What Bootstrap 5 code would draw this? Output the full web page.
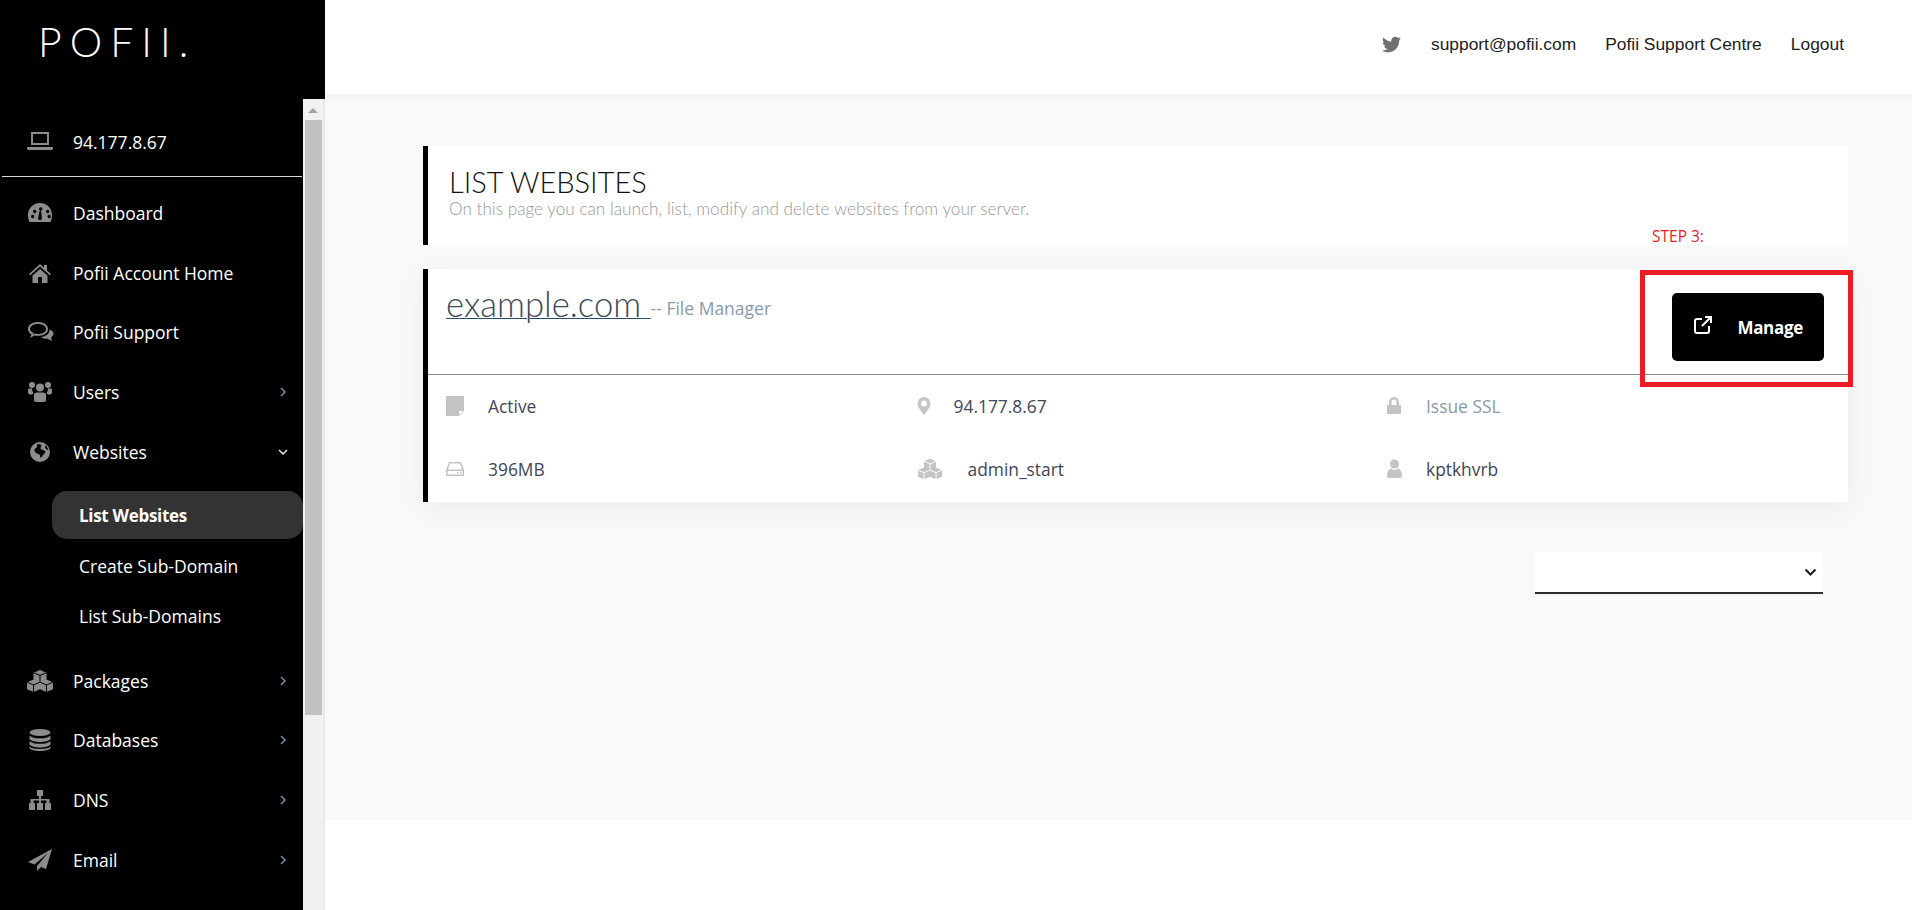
<!DOCTYPE html>
<html lang="en">
<head>
<meta charset="utf-8">
<title>List Websites</title>
<link href="https://cdn.jsdelivr.net/npm/bootstrap@5.3.0/dist/css/bootstrap.min.css" rel="stylesheet">
<style>
html,body{height:100%;overflow:hidden;background:#fff}
body{font-family:"Open Sans",sans-serif;width:1912px;height:910px}
.shell{height:910px}
.side{width:325px;background:#000;flex:none}
.logo-wrap{height:99px;padding:16px 0 0 38px}
.logo-text{font-family:Lato,sans-serif;font-weight:300;font-size:41px;line-height:52px;letter-spacing:8px;color:#fff}
.side-body{height:811px;overflow:hidden}
.side-nav{width:303px;flex:none;overflow:hidden}
.ip-row{border-bottom:1px solid #d8d8d8;margin-left:2px;margin-right:1px;height:78px;padding-top:30px;padding-left:26px;color:#fff}
.nav-line{height:59.750px;color:#fff;font-size:17.5px;padding-left:26px;padding-right:12px;text-decoration:none}
.nav-first{margin-top:6px}
.ico{width:28px;height:24px;fill:#8c8c8c;flex:none;margin-right:19px}
.ip-row .ico{margin-left:-2px;margin-right:19px}
.ip-text{font-size:17.5px}
.chev{width:10px;height:10px;fill:none;stroke:#6f8fa8;stroke-width:1.5;margin-left:auto;margin-right:3px}
.chev-open{stroke:#e8e8e8}
.sub-list{padding:9px 0 4px 52px;margin-bottom:6px}
.sub-link{display:flex;align-items:center;height:48px;margin-bottom:2px;padding-left:27px;padding-top:2px;color:#fff;font-size:17.5px;text-decoration:none;border-radius:15px}
.sub-on{background:#333;font-weight:700;font-size:17px;letter-spacing:-.3px}
.fake-bar{width:22px;background:#f1f1f1;border-right:2px solid #e6e9f0}
.fake-up{height:21px;padding-top:9px}
.fake-up i{display:block;width:0;height:0;margin:0 auto;border:5px solid transparent;border-top:0;border-bottom:5px solid #a3a3a3}
.fake-thumb{height:595px;width:17px;background:#c1c1c1;margin-left:2px}
.main-col{min-width:0}
.top-bar{height:94px;background:#fff;box-shadow:0 0 12px rgba(0,0,0,.06);position:relative;z-index:1;padding:0 68px 5px 0;font-family:"Liberation Sans",sans-serif;font-size:17.4px;color:#1c1c1c}
.top-bar a{color:#1c1c1c;text-decoration:none;margin-left:29px}
.top-bar svg{width:21px;height:19px;fill:#707070}
.stage{height:726px;background:#f9f9f9;padding:52px 64px 0 98px}
.head-panel{height:99px;background:#fff;border-left:5px solid #000;padding:18px 0 0 21px}
.head-title{font-family:Lato,sans-serif;font-weight:300;font-size:29px;line-height:36px;color:#111;margin:0}
.head-sub{font-family:Lato,sans-serif;font-weight:300;font-size:17.2px;line-height:18px;color:#999;margin:0}
.step-mark{height:24px;padding-left:1229px;color:#ed1c24;font-size:15.5px;line-height:21px;margin-top:-19px;position:relative}
.site-panel{height:233px;background:#fff;border-left:5px solid #000;box-shadow:0 6px 30px rgba(0,0,0,.06);margin-top:19px;position:relative}
.site-top{height:106px;border-bottom:1px solid #8c8c8c;padding:13px 24px 0 18px}
.site-name{font-family:Lato,sans-serif;font-weight:300;font-size:34.700px;line-height:44px;color:#3d4a5a;text-decoration:underline;text-decoration-color:#2d4a6b;text-decoration-thickness:1px}
.site-tail{color:#8a9aab;font-size:17.5px;position:relative;top:-2px}
.manage-btn{width:152px;height:68px;background:#000;color:#fff;font-size:17px;font-weight:700;letter-spacing:-.3px;border:0;border-radius:5px;margin-top:11px;padding:2px 21px 0 21px}
.manage-btn svg{width:20px;height:20px;fill:none;stroke:#fff;stroke-width:2;flex:none;margin-top:-6px}
.red-box{position:absolute;left:1212px;top:1px;width:213px;height:117px;border:5px solid #ed1c24;pointer-events:none}
.site-grid{display:grid;grid-template-columns:470.5px 470.5px 1fr;padding-left:18px}
.site-cell{height:63px;color:#3f4659;font-size:17.4px}
.site-cell svg{width:20px;height:20px;fill:#c4c4c4;flex:none;margin-top:-2px}
.site-cell svg.cube-ico{width:26px;height:24px}
.gap-a{margin-left:22px}
.gap-b{margin-left:17px}
.gap-c{margin-left:25px}
.gap-d{margin-left:19px}
.cell-muted{color:#8a9aab}
.pick-wrap{margin-top:50px;padding-right:25px}
.pick{width:288px;height:42px;background:#fff;border-bottom:2px solid #2d2d2d;padding-right:6px}
.pick svg{width:13px;height:9px;fill:none;stroke:#222;stroke-width:2.2}
.cube-lines{fill:none;stroke-width:1}
.ico .cube-lines{stroke:#000}
.cube-ico .cube-lines{stroke:#fff}
</style>
</head>
<body>
<div class="shell d-flex">
  <aside class="side d-flex flex-column">
    <div class="logo-wrap"><span class="logo-text">POFII.</span></div>
    <div class="side-body d-flex">
      <nav class="side-nav">
        <div class="ip-row d-flex align-items-start">
          <svg class="ico" viewBox="0 0 28 24"><path d="M5 3h18v13H5zM7 5v9h14V5zM1 18h26v1.500q0 1.500-1.500 1.500h-23Q1 21 1 19.500z" fill-rule="evenodd"/></svg>
          <span class="ip-text">94.177.8.67</span>
        </div>
        <a class="nav-line nav-first d-flex align-items-center" href="#"><svg class="ico" viewBox="0 0 28 24"><path fill-rule="evenodd" d="M14 2C6.500 2 2 8 2 14c0 3 .5 5 1.500 7h21c1-2 1.500-4 1.500-7 0-6-4.500-12-12-12zM13 8a1.700 1.700 0 1 0 0-.1zM7 10.500a1.700 1.700 0 1 0 0-.1zM20 10.500a1.700 1.700 0 1 0 0-.1zM5 15.500a1.700 1.700 0 1 0 0-.1zM21.500 15.500a1.700 1.700 0 1 0 0-.1zM12 18a2.300 2.300 0 0 0 4 0l-1-8h-1.500z"/></svg>Dashboard</a>
        <a class="nav-line d-flex align-items-center" href="#"><svg class="ico" viewBox="0 0 28 24"><path d="M14 3 3 13l1.200 1.300L14 5.500l9.800 8.800L25 13l-4-3.600V4h-3v2.700zM6.500 14.500V22h5.500v-6h4v6h5.500v-7.500L14 8z"/></svg>Pofii Account Home</a>
        <a class="nav-line d-flex align-items-center" href="#"><svg class="ico" viewBox="0 0 28 24"><path fill-rule="evenodd" d="M12 2C6 2 2 5 2 9c0 2.300 1.300 4.200 3.500 5.500L4 18l4.500-2.500c1.100.2 2.300.3 3.500.3 6 0 10-3 10-6.800S18 2 12 2zm0 2c4.700 0 8 2.200 8 5s-3.300 5-8 5c-1.300 0-2.500-.2-3.500-.5l-1.500.9.500-1.700C5.300 11.800 4 10.500 4 9c0-2.800 3.300-5 8-5z"/><path d="M23.500 9.500c.3 3.800-3.500 7-8.500 7.500 1.500 1.300 4 2 6.500 1.700L26 21l-1-3.500c1.500-1 2.500-2.500 2.500-4 0-1.600-1.500-3-4-4z"/></svg>Pofii Support</a>
        <a class="nav-line d-flex align-items-center" href="#"><svg class="ico" viewBox="0 0 28 24"><circle cx="14" cy="7.500" r="4"/><circle cx="6" cy="5" r="3"/><circle cx="22" cy="5" r="3"/><path d="M2 9.500q0-1 1-1h3a6 6 0 0 0 1.500 4.500L6 14.500H4q-2 0-2-2zM26 9.500q0-1-1-1h-3a6 6 0 0 1-1.500 4.500l1.500 1.500h2q2 0 2-2zM8 15q0-2.500 3-2.500h6q3 0 3 2.500v5q0 2-2 2h-8q-2 0-2-2z"/></svg>Users<svg class="chev" viewBox="0 0 10 10"><path d="M3 1l4 4-4 4"/></svg></a>
        <a class="nav-line d-flex align-items-center" href="#"><svg class="ico" viewBox="0 0 28 24"><path fill-rule="evenodd" d="M14 2a10 10 0 1 0 0 20 10 10 0 0 0 0-20zm-3 2.500c2-.5 4 0 4.500 1s-1.500 1.500-1 3 3 1 4.500 2.500-2 3.500-3 5.500-2 1-2-1-4-1.500-5-3.500-.5-3 1-4 1-2.500 1-3.500zm9 .5 2.500 5-2-.5-1.500-2z"/></svg>Websites<svg class="chev chev-open" viewBox="0 0 10 10"><path d="M1 3l4 4 4-4"/></svg></a>
        <div class="sub-list">
          <a class="sub-link sub-on" href="#">List Websites</a>
          <a class="sub-link" href="#">Create Sub-Domain</a>
          <a class="sub-link" href="#">List Sub-Domains</a>
        </div>
        <a class="nav-line d-flex align-items-center" href="#"><svg class="ico" viewBox="0 0 28 24"><path d="M14 1l6.500 2.700v7L14 13.400l-6.500-2.700v-7zM7.500 10.500l6.500 2.700v7.100L7.500 23 1 20.300v-7.100zM20.500 10.500l6.500 2.700v7.100L20.500 23 14 20.300v-7.100z"/><path class="cube-lines" d="M7.500 3.700 14 6.400l6.500-2.700M14 6.400v7M1 13.200l6.500 2.700 6.500-2.700M7.500 15.900V23M14 13.200l6.500 2.700 6.500-2.700M20.500 15.900V23"/></svg>Packages<svg class="chev" viewBox="0 0 10 10"><path d="M3 1l4 4-4 4"/></svg></a>
        <a class="nav-line d-flex align-items-center" href="#"><svg class="ico" viewBox="0 0 28 24"><ellipse cx="14" cy="4.500" rx="10.500" ry="3.500"/><path d="M3.500 7.500c2 2 5.500 2.800 10.500 2.800s8.500-.8 10.500-2.800V11c-1.500 2-5.500 3-10.500 3S5 13 3.500 11zM3.500 13c2 2 5.500 2.800 10.500 2.800s8.500-.8 10.500-2.800v3.500c-1.500 2-5.500 3-10.500 3s-9-1-10.500-3zM3.500 18.500c2 1.800 5.500 2.500 10.500 2.500s8.500-.7 10.500-2.500V20c-1 2-5.500 3-10.500 3S4.500 22 3.500 20z"/></svg>Databases<svg class="chev" viewBox="0 0 10 10"><path d="M3 1l4 4-4 4"/></svg></a>
        <a class="nav-line d-flex align-items-center" href="#"><svg class="ico" viewBox="0 0 28 24"><path d="M11 2h6v6h-2v3h8.500v4H25v7h-6v-7h1.500v-2.500H15V15h2v7h-6v-7h2v-2.500H7.500V15H9v7H3v-7h1.500v-4H13V8h-2z"/></svg>DNS<svg class="chev" viewBox="0 0 10 10"><path d="M3 1l4 4-4 4"/></svg></a>
        <a class="nav-line d-flex align-items-center" href="#"><svg class="ico" viewBox="0 0 28 24"><path d="M26 1 2 14l6.500 2.500L22 5 11 18v5l4-4 5 2z"/></svg>Email<svg class="chev" viewBox="0 0 10 10"><path d="M3 1l4 4-4 4"/></svg></a>
      </nav>
      <div class="fake-bar flex-grow-1">
        <div class="fake-up"><i></i></div>
        <div class="fake-thumb"></div>
      </div>
    </div>
  </aside>
  <main class="main-col flex-grow-1">
    <header class="top-bar d-flex align-items-center justify-content-end">
      <svg viewBox="0 0 512 512"><path d="M459.370 151.716c.325 4.548.325 9.097.325 13.645 0 138.720-105.583 298.558-298.558 298.558-59.452 0-114.680-17.219-161.137-47.106 8.447.974 16.568 1.299 25.340 1.299 49.055 0 94.213-16.568 130.274-44.832-46.132-.975-84.792-31.188-98.112-72.772 6.498.974 12.995 1.624 19.818 1.624 9.421 0 18.843-1.300 27.614-3.573-48.081-9.747-84.143-51.980-84.143-102.985v-1.299c13.969 7.797 30.214 12.670 47.431 13.319-28.264-18.843-46.781-51.005-46.781-87.391 0-19.492 5.197-37.360 14.294-52.954 51.655 63.675 129.300 105.258 216.365 109.807-1.624-7.797-2.599-15.918-2.599-24.040 0-57.828 46.782-104.934 104.934-104.934 30.213 0 57.502 12.670 76.670 33.137 23.715-4.548 46.456-13.320 66.599-25.340-7.798 24.366-24.366 44.833-46.132 57.827 21.117-2.273 41.584-8.122 60.426-16.243-14.292 20.791-32.161 39.308-52.628 54.253z"/></svg>
      <a href="#">support@pofii.com</a>
      <a href="#">Pofii Support Centre</a>
      <a href="#">Logout</a>
    </header>
    <section class="stage">
      <div class="head-panel">
        <h1 class="head-title">LIST WEBSITES</h1>
        <p class="head-sub">On this page you can launch, list, modify and delete websites from your server.</p>
      </div>
      <div class="step-mark">STEP 3:</div>
      <div class="site-panel">
        <div class="site-top d-flex justify-content-between align-items-start">
          <div><a class="site-name" href="#">example.com </a><span class="site-tail">-- File Manager</span></div>
          <button class="manage-btn d-flex align-items-center justify-content-between" type="button">
            <svg viewBox="0 0 20 20"><path d="M9 4H4q-2 0-2 2v10q0 2 2 2h10q2 0 2-2v-5M9 11 18 2M12 2h6v6"/></svg>
            <span>Manage</span>
          </button>
        </div>
        <div class="site-grid">
          <div class="site-cell d-flex align-items-center"><svg viewBox="0 0 20 20"><path d="M0 0h18v15l-5 5H0zM13 15v4l4-4z" fill-rule="evenodd"/></svg><span class="gap-a">Active</span></div>
          <div class="site-cell d-flex align-items-center"><svg viewBox="0 0 20 20"><path fill-rule="evenodd" d="M7 1A6.500 6.500 0 0 0 .5 7.500c0 3 3.500 8 6.500 11.500 3-3.500 6.500-8.500 6.500-11.500A6.500 6.500 0 0 0 7 1zm0 3.500a3 3 0 1 1 0 6 3 3 0 0 1 0-6z"/></svg><span class="gap-b">94.177.8.67</span></div>
          <div class="site-cell d-flex align-items-center cell-muted"><svg viewBox="0 0 20 20"><path fill-rule="evenodd" d="M2 9V6a5 5 0 0 1 10 0v3h2v9H0V9zm2.500 0h5V6a2.500 2.500 0 0 0-5 0z"/></svg><span class="gap-d">Issue SSL</span></div>
          <div class="site-cell d-flex align-items-center"><svg viewBox="0 0 20 20"><path fill-rule="evenodd" d="M3 3h12l3 8v6H0v-6zm1 1.500-2 6h14l-2-6zM1.500 12v3.500h15V12zM11 13h1.500v1.500H11zM14 13h1.500v1.500H14z"/></svg><span class="gap-a">396MB</span></div>
          <div class="site-cell d-flex align-items-center"><svg class="cube-ico" viewBox="0 0 28 24"><path d="M14 1l6.500 2.700v7L14 13.400l-6.500-2.700v-7zM7.500 10.500l6.500 2.700v7.100L7.500 23 1 20.300v-7.100zM20.500 10.500l6.500 2.700v7.100L20.500 23 14 20.300v-7.100z"/><path class="cube-lines" d="M7.500 3.700 14 6.400l6.500-2.700M14 6.400v7M1 13.200l6.500 2.700 6.500-2.700M7.500 15.900V23M14 13.200l6.500 2.700 6.500-2.700M20.500 15.900V23"/></svg><span class="gap-c">admin_start</span></div>
          <div class="site-cell d-flex align-items-center"><svg viewBox="0 0 20 20"><circle cx="7.500" cy="5" r="4.500"/><path d="M1.500 19Q0 19 0 17c0-4 1.500-7 4-7.500a5 5 0 0 0 7 0c2.500.5 4 3.500 4 7.500q0 2-1.500 2z"/></svg><span class="gap-d">kptkhvrb</span></div>
        </div>
        <div class="red-box"></div>
      </div>
      <div class="pick-wrap d-flex justify-content-end">
        <div class="pick d-flex align-items-center justify-content-end"><svg viewBox="0 0 13 9"><path d="M1.500 1.500 6.500 6.500 11.500 1.500"/></svg></div>
      </div>
    </section>
  </main>
</div>
<script src="https://cdn.jsdelivr.net/npm/bootstrap@5.3.0/dist/js/bootstrap.bundle.min.js"></script>
</body>
</html>
